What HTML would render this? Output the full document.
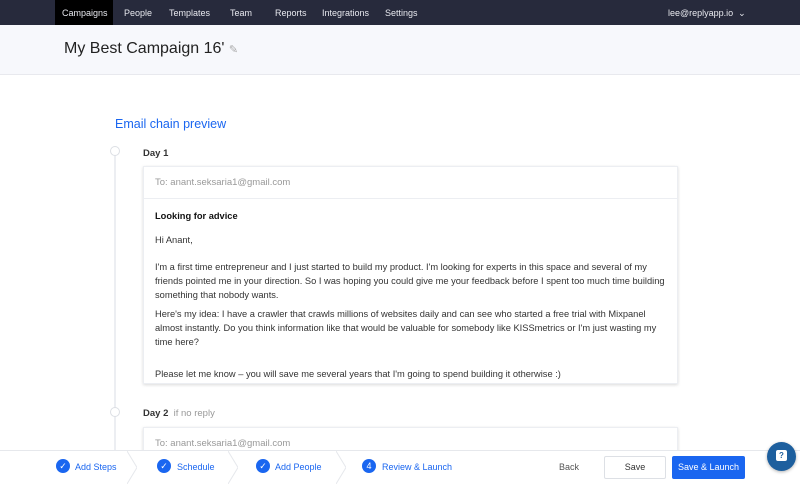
<!DOCTYPE html>
<html><head><meta charset="utf-8"><style>
*{margin:0;padding:0;box-sizing:border-box}
body{width:800px;height:483px;overflow:hidden;background:#fff;font-family:"Liberation Sans",sans-serif;position:relative;color:#222}
.nav{position:absolute;top:0;left:0;width:800px;height:25px;background:#272a3c;color:#e8e9ef;font-size:9px}
.nav span{position:absolute;top:8px}
.tab{position:absolute;left:55px;top:0;width:58px;height:25px;background:#000}
.hdr{position:absolute;top:25px;left:0;width:800px;height:50px;background:#f7f8fc;border-bottom:1px solid #e8e9ee}
.title{position:absolute;left:64px;top:40px;font-size:16px;color:#222}
.ecp{position:absolute;left:115px;top:117px;font-size:12.5px;color:#1a66f0}
.line{position:absolute;left:114px;top:155px;width:2px;height:300px;background:#eceef2}
.dot{position:absolute;width:10px;height:10px;border:1px solid #dcdfe4;border-radius:50%;background:#fff}
.day{position:absolute;left:143px;font-size:9.5px;font-weight:bold;color:#333}
.card{position:absolute;left:143px;width:535px;background:#fff;box-shadow:0 1px 3px rgba(0,0,0,.15);border:1px solid #eceef2}
.to{height:32px;border-bottom:1px solid #eceef2;padding:10px 11px;font-size:9.5px;color:#999}
.bd{padding:10px 11px;font-size:9.3px;line-height:14px;color:#333}
.foot{position:absolute;top:450px;left:0;width:800px;height:33px;background:#fff;border-top:1px solid #e6e8ec;font-size:9px}
.st{position:absolute;top:11px;color:#1a66f0}
.ck{position:absolute;top:8px;width:14px;height:14px;border-radius:50%;background:#1a66f0;color:#fff;font-size:9px;text-align:center;line-height:14px}
.chev{position:absolute;top:0;width:10px;height:33px}
</style></head><body>
<div class="nav"><div class="tab"></div>
<span style="left:62px">Campaigns</span><span style="left:124px">People</span><span style="left:169px">Templates</span><span style="left:230px">Team</span><span style="left:275px">Reports</span><span style="left:322px">Integrations</span><span style="left:385px">Settings</span><span style="left:668px">lee@replyapp.io &nbsp;⌄</span></div>
<div class="hdr"></div>
<div class="title">My Best Campaign 16' <span style="font-size:11px;color:#aaa">✎</span></div>
<div class="ecp">Email chain preview</div>
<div class="line"></div>
<div class="dot" style="left:110px;top:146px"></div>
<div class="day" style="top:148px">Day 1</div>
<div class="card" style="top:166px;height:218px">
<div class="to">To: anant.seksaria1@gmail.com</div>
<div class="bd"><p style="font-weight:bold;color:#111;margin-bottom:10px">Looking for advice</p>
<p style="margin-bottom:13px">Hi Anant,</p>
<p style="margin-bottom:5px">I'm a first time entrepreneur and I just started to build my product. I'm looking for experts in this space and several of my friends pointed me in your direction. So I was hoping you could give me your feedback before I spent too much time building something that nobody wants.</p>
<p style="margin-bottom:18px">Here's my idea: I have a crawler that crawls millions of websites daily and can see who started a free trial with Mixpanel almost instantly. Do you think information like that would be valuable for somebody like KISSmetrics or I'm just wasting my time here?</p>
<p>Please let me know – you will save me several years that I'm going to spend building it otherwise :)</p></div></div>
<div class="dot" style="left:110px;top:407px"></div>
<div class="day" style="top:408px">Day 2 <span style="font-weight:normal;color:#999">&nbsp;if no reply</span></div>
<div class="card" style="top:427px;height:40px"><div class="to">To: anant.seksaria1@gmail.com</div></div>
<div class="foot">
<div class="ck" style="left:56px">✓</div><span class="st" style="left:75px">Add Steps</span>
<svg class="chev" style="left:127px" viewBox="0 0 10 33"><path d="M0 0L10 16.5L0 33" fill="none" stroke="#e6e8ec"/></svg>
<div class="ck" style="left:157px">✓</div><span class="st" style="left:177px">Schedule</span>
<svg class="chev" style="left:228px" viewBox="0 0 10 33"><path d="M0 0L10 16.5L0 33" fill="none" stroke="#e6e8ec"/></svg>
<div class="ck" style="left:256px">✓</div><span class="st" style="left:275px">Add People</span>
<svg class="chev" style="left:336px" viewBox="0 0 10 33"><path d="M0 0L10 16.5L0 33" fill="none" stroke="#e6e8ec"/></svg>
<div class="ck" style="left:362px">4</div><span class="st" style="left:382px">Review &amp; Launch</span>
<span style="position:absolute;left:559px;top:11px;color:#555">Back</span>
<div style="position:absolute;left:604px;top:5px;width:62px;height:23px;border:1px solid #dde0e5;border-radius:2px;text-align:center;line-height:21px;color:#333">Save</div>
<div style="position:absolute;left:672px;top:5px;width:73px;height:23px;background:#1a66f0;border-radius:2px;text-align:center;line-height:23px;color:#fff">Save &amp; Launch</div>
</div>
<div style="position:absolute;left:767px;top:442px;width:29px;height:29px;border-radius:50%;background:#1d5f9e;box-shadow:0 1px 3px rgba(0,0,0,.3)"><div style="position:absolute;left:9px;top:8px;width:11px;height:11px;background:#fff;border-radius:2px;color:#1d5f9e;font-size:8px;font-weight:bold;text-align:center;line-height:11px">?</div></div>
</body></html>
